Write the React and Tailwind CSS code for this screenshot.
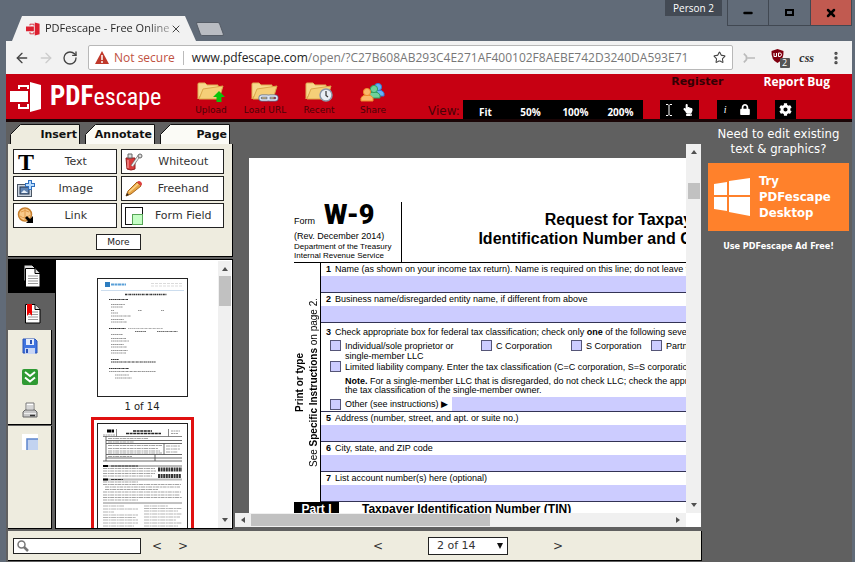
import React, { useState } from 'react';
import { ArrowLeft, ArrowRight, RotateCw, Star, X, Minus, MoreVertical } from 'lucide-react';
import { FaLock, FaHandPointUp, FaCog } from 'react-icons/fa';

const BrandMark = ({ className, color }) => (
  <svg className={className} viewBox="0 0 32 32" fill={color}>
    <path d="M20 1 L31 4 V28 L20 31 Z" />
    <path d="M0 10 H18 V21 H0 Z" />
    <path d="M9 8 V5 H18 V8 M9 23 V27 H18 V23" fill="none" stroke={color} strokeWidth="2" />
  </svg>
);

const FolderIcon = ({ children }) => (
  <svg className="w-7 h-5" viewBox="0 0 28 20">
    <path d="M1 17 V2 Q1 1 2 1 H8 L10 3 H21 V7 H8 Z" fill="#f7d98c" stroke="#e0b055" />
    <path d="M2 17 L6 7 L26 4 L22 17 Z" fill="#f5cf78" stroke="#dba94c" />
    {children}
  </svg>
);

const UploadIcon = () => (
  <FolderIcon>
    <path d="M22 9 L28 15 H24.500 V20 H19.500 V15 H16 Z" fill="#0bc40b" />
  </FolderIcon>
);

const LoadUrlIcon = () => (
  <FolderIcon>
    <g fill="none" stroke="#5b6f92" strokeWidth="3">
      <rect x="9" y="14" width="9" height="4" rx="2" />
      <rect x="17" y="14" width="9" height="4" rx="2" />
    </g>
    <g fill="none" stroke="#dfe6f2" strokeWidth="1.500">
      <rect x="9" y="14" width="9" height="4" rx="2" />
      <rect x="17" y="14" width="9" height="4" rx="2" />
    </g>
  </FolderIcon>
);

const RecentIcon = () => (
  <FolderIcon>
    <circle cx="21" cy="13" r="6" fill="#e9eef5" stroke="#8b97a8" strokeWidth="1.500" />
    <path d="M21 9 V13.500 L23 15" fill="none" stroke="#333" strokeWidth="1.200" />
  </FolderIcon>
);

const Person = ({ x, y, fill, stroke }) => (
  <g transform={`translate(${x} ${y})`} fill={fill} stroke={stroke}>
    <path d="M0 13 V10 Q1 7 6 7 Q11 7 12 10 V13 Z" />
    <circle cx="6" cy="4" r="3.600" />
  </g>
);

const ShareIcon = () => (
  <svg className="w-7 h-5" viewBox="0 0 28 20">
    <Person x="13" y="1" fill="#66b3f5" stroke="#3579d0" />
    <Person x="9" y="3" fill="#6fd19a" stroke="#2e9f5f" />
    <Person x="2" y="6" fill="#fbb769" stroke="#ee8a2c" />
  </svg>
);

const WhiteoutIcon = () => (
  <svg className="w-5 h-5" viewBox="0 0 20 20">
    <path d="M2 6 H11 V17 Q7 19 3 17 Z" fill="#d93a3a" stroke="#8d2020" />
    <path d="M4 8 V16" stroke="#f58a8a" strokeWidth="1.500" />
    <path d="M4 2 H8 V6 H4 Z" fill="#ddd" stroke="#666" />
    <path d="M8 14 L15 4" stroke="#777" strokeWidth="3" />
    <path d="M8 14 L15 4" stroke="#eee" strokeWidth="1.500" />
    <circle cx="16" cy="4" r="2" fill="#ddd" stroke="#666" />
  </svg>
);

const ImageIcon = () => (
  <svg className="w-5 h-5" viewBox="0 0 20 20">
    <rect x="1.500" y="5.500" width="14" height="12" fill="#c9d3df" stroke="#4a5563" />
    <rect x="4" y="8" width="9" height="7" fill="#5f82b0" stroke="#26374f" />
    <path d="M5 14 L8 11 L12 14 Z" fill="#e8f0fa" />
    <path d="M14 1 V11 M9 6 H19" stroke="#2f6fbe" strokeWidth="4" />
    <path d="M14 2 V10 M10 6 H18" stroke="#b8dcff" strokeWidth="2" />
  </svg>
);

const PencilIcon = () => (
  <svg className="w-5 h-5" viewBox="0 0 20 20">
    <path d="M2 17 L4 12 L13 3 L17 7 L7 15 Z" fill="#e8a544" stroke="#a8661c" />
    <path d="M13 3 Q15 1 17 3 Q19 5 17 7 Z" fill="#dc4040" />
    <path d="M5 13 L14 5" stroke="#f9d58c" strokeWidth="1.500" />
    <path d="M2 17 L3 14 L5 16 Z" fill="#222" />
  </svg>
);

const LinkIcon = () => (
  <svg className="w-5 h-5" viewBox="0 0 20 20">
    <circle cx="9" cy="8.500" r="6.500" fill="#f8c98a" stroke="#c67e2c" strokeWidth="1.500" />
    <path d="M5 6 Q9 3 13 6 M4 10 Q9 14 14 9 M9 2 V15" fill="none" stroke="#e09a4b" />
    <path d="M17 10 V17 H10 L12 15 L9 12 L11 10 L14 13 Z" fill="#000" />
  </svg>
);

const FieldIcon = () => (
  <svg className="w-5 h-5" viewBox="0 0 20 20">
    <rect x="1.500" y="1.500" width="17" height="17" fill="#fff" stroke="#111" />
    <rect x="8.500" y="8.500" width="10" height="10" fill="#c5ffc5" stroke="#57a557" />
  </svg>
);

const SheetIcon = ({ bookmark }) => (
  <svg className="w-5 h-6" viewBox="0 0 20 24">
    {!bookmark && <path d="M2 1 H10 L14 5 V17 H2 Z" fill="#ddd" stroke="#000" />}
    <path d="M3.500 4.500 H13 L18 9.500 V23 H3.500 Z" fill="#fff" stroke="#000" />
    <path d="M13 4.500 V9.500 H18" fill="#ddd" stroke="#000" />
    <path d="M6 12 H16 M6 14.500 H16 M6 17 H16 M6 19.500 H16" stroke="#999" />
    {bookmark && <path d="M5 4 H10 V16 L7.500 13 L5 16 Z" fill="#f00000" />}
  </svg>
);

const SaveIcon = () => (
  <svg className="w-4 h-4" viewBox="0 0 16 16">
    <path d="M1 1 H13 L15 3 V15 H1 Z" fill="#3f74e0" stroke="#2b53b5" />
    <rect x="4" y="1" width="8" height="6" fill="#e3ebfb" />
    <rect x="8" y="2" width="2" height="4" fill="#2b53b5" />
    <rect x="3" y="10" width="10" height="6" fill="#c8d6f5" />
    <rect x="4" y="11" width="2" height="4" fill="#2b53b5" />
  </svg>
);

const DownloadIcon = () => (
  <svg className="w-4 h-4" viewBox="0 0 16 16">
    <rect width="16" height="16" rx="2" fill="#2f9a33" />
    <path d="M3 3 L8 7 L13 3 M3 8.500 L8 12.500 L13 8.500" fill="none" stroke="#fff" strokeWidth="2" />
  </svg>
);

const PrintIcon = () => (
  <svg className="w-4 h-5" viewBox="0 0 16 20">
    <path d="M4 10 L4 3 H12 V10" fill="#fff" stroke="#777" />
    <path d="M5 6 H11 M5 8 H11" stroke="#aaa" />
    <path d="M3 10 H13 L15 12 V17 H1 V12 Z" fill="#c8c8c8" stroke="#666" />
    <path d="M2 13.500 H14" stroke="#eee" />
    <path d="M8 15.500 H13" stroke="#333" strokeWidth="1.500" />
  </svg>
);

const WindowsIcon = () => (
  <svg className="w-9 h-10" viewBox="0 0 36 40" fill="#fff">
    <path d="M0 7 L13 5 V18 H0 Z M15 4 L36 1 V18 H15 Z M0 20 H13 V34 L0 32 Z M15 20 H36 V39 L15 35 Z" />
  </svg>
);

const Arrow = ({ d }) => (
  <svg className="w-2 h-2 shrink-0" viewBox="0 0 8 8" fill="#505050">
    <path d={d} />
  </svg>
);

const UP = 'M1 6 L4 2 L7 6 Z';
const DOWN = 'M1 2 L4 6 L7 2 Z';
const LEFT = 'M6 1 L2 4 L6 7 Z';
const RIGHT = 'M2 1 L6 4 L2 7 Z';

const actions = [
  { label: 'Upload', icon: UploadIcon },
  { label: 'Load URL', icon: LoadUrlIcon },
  { label: 'Recent', icon: RecentIcon },
  { label: 'Share', icon: ShareIcon }
];

const insertTools = [
  { label: 'Text', icon: () => <span className="w-5 text-center font-['Liberation_Serif',serif] font-bold text-[24px] leading-5 text-black">T</span> },
  { label: 'Whiteout', icon: WhiteoutIcon },
  { label: 'Image', icon: ImageIcon },
  { label: 'Freehand', icon: PencilIcon },
  { label: 'Link', icon: LinkIcon },
  { label: 'Form Field', icon: FieldIcon }
];

const TitleBar = () => (
  <div className="flex justify-between h-[41px] shrink-0">
    <div className="flex items-end pl-[6px]">
      <div className="flex items-center w-[184px] h-[25px] pl-[14px] pr-[14px] bg-[#f2f2f2] [clip-path:polygon(10px_0,calc(100%-11px)_0,100%_100%,0_100%)]">
        <BrandMark className="w-[14px] h-[14px] shrink-0" color="#dc2030" />
        <span className="flex-1 ml-[5px] text-[11px] whitespace-nowrap bg-linear-to-r from-[#222] from-80% to-[#aaa] bg-clip-text text-transparent">
          PDFescape - Free Online
        </span>
        <button aria-label="Close tab" className="shrink-0"><X className="w-3 h-3 text-[#444]" /></button>
      </div>
      <button aria-label="New tab" className="w-[24px] h-[14px] mb-[5px] ml-[2px] skew-x-[20deg] rounded-xs bg-[#b9bcc2] border border-[#555c66]" />
    </div>
    <div className="flex items-start">
      <span className="h-4 px-2 mr-[5px] bg-[#434a54] text-white text-[10px] leading-4">Person 2</span>
      <button aria-label="Minimize" className="flex justify-center items-center w-[42px] h-[26px] border border-t-0 border-[#414852]">
        <Minus className="w-3 h-3 text-black" strokeWidth={5} />
      </button>
      <button aria-label="Maximize" className="flex justify-center items-center w-[41px] h-[26px] border-b border-[#414852]">
        <span className="w-[9px] h-[7px] border-2 border-black" />
      </button>
      <button aria-label="Close" className="flex justify-center items-center w-[42px] h-[26px] border border-t-0 border-[#414852] bg-[#c15a50]">
        <X className="w-3 h-3 text-black" strokeWidth={5} />
      </button>
    </div>
  </div>
);

const AddressBar = () => (
  <div className="flex items-center h-[33px] shrink-0 pl-2 pr-2 bg-[#f2f2f2]">
    <button aria-label="Back"><ArrowLeft className="w-4 h-4 text-[#444]" /></button>
    <button aria-label="Forward" className="ml-2"><ArrowRight className="w-4 h-4 text-[#ccc]" /></button>
    <button aria-label="Reload" className="ml-2"><RotateCw className="w-4 h-4 text-[#444]" /></button>
    <div className="flex items-center flex-1 min-w-0 h-[25px] ml-[10px] pl-[6px] pr-[6px] bg-white border border-[#b8b8b8] rounded-xs">
      <svg className="w-[14px] h-[13px] shrink-0" viewBox="0 0 14 13">
        <path d="M7 0 L14 13 H0 Z" fill="#c0392b" />
        <path d="M7 4 V9 M7 10 V12" stroke="#fff" strokeWidth="1.500" />
      </svg>
      <span className="ml-[5px] text-[12px] text-[#c0513f] whitespace-nowrap">Not secure</span>
      <span className="w-px h-[14px] mx-2 bg-[#bbb]" />
      <span className="flex-1 min-w-0 whitespace-nowrap text-[12px] text-[#777]">
        <span className="text-[#222]">www.pdfescape.com</span>/open/?C27B608AB293C4E271AF400102F8AEBE742D3240DA593E71
      </span>
      <button aria-label="Bookmark"><Star className="w-[13px] h-[13px] text-[#444]" /></button>
    </div>
    <svg className="w-3 h-3 shrink-0 ml-[10px]" viewBox="0 0 14 12" fill="none" stroke="#bbb" strokeWidth="2">
      <path d="M1 1 L4 4 V8 L1 11 M5 6 H14" />
    </svg>
    <svg className="w-5 h-5 shrink-0 ml-4" viewBox="0 0 20 20">
      <path d="M6.500 1 L12.500 3 Q13 12 6.500 15 Q0 12 0.500 3 Z" fill="#800010" />
      <path d="M3 5 V8.500 H5.500 V5 M7.500 5 V8.500 H9 Q10.500 8 10.500 6.700 Q10.500 5 9 5 Z" fill="none" stroke="#fff" strokeWidth="1" />
      <rect x="9" y="10" width="10" height="10" rx="1" fill="#555" />
      <text x="11" y="18" fill="#fff" fontSize="9">2</text>
    </svg>
    <span className="ml-2 font-['Liberation_Serif',serif] italic font-bold text-[12px] text-[#333]">css</span>
    <button aria-label="Menu" className="ml-[14px]"><MoreVertical className="w-4 h-4 text-[#444]" strokeWidth={3} /></button>
  </div>
);

const AppHeader = () => (
  <header className="flex h-12 shrink-0 pl-1 bg-[#c70012] border-b-3 border-[#1a0506]">
    <a href="#home" className="flex items-center text-white font-['Liberation_Sans_Narrow','Roboto_Condensed',sans-serif]">
      <BrandMark className="w-8 h-8" color="#fff" />
      <span className="flex items-baseline w-[114px] ml-2 leading-8">
        <span className="text-[27px] font-bold">PDF</span>
        <span className="text-[24px]">escape</span>
      </span>
    </a>
    <nav className="flex ml-[20px] font-['DejaVu_Sans',sans-serif]">
      {actions.map(({ label, icon: Icon }) => (
        <button key={label} className="flex flex-col items-center w-[54px] pt-2 text-[9px] leading-4 text-[#4a0207] whitespace-nowrap">
          <Icon />
          {label}
        </button>
      ))}
    </nav>
    <div className="flex flex-col flex-1 justify-between pl-[28px]">
      <div className="flex justify-end gap-10 pr-[22px] text-[12px] leading-4 font-bold whitespace-nowrap">
        <a href="#register" className="text-[#330004] text-[11px] font-['DejaVu_Sans',sans-serif]">Register</a>
        <a href="#bug" className="text-white">Report Bug</a>
      </div>
      <div className="flex items-end h-[19px]">
        <span className="w-[35px] text-[12px] leading-4 text-[#4a0207] font-['DejaVu_Sans',sans-serif]">View:</span>
        <div className="flex bg-black">
          {['Fit', '50%', '100%', '200%'].map((zoom) => (
            <button key={zoom} className="w-[45px] h-[19px] pt-1 text-[10px] leading-4 font-bold text-white">{zoom}</button>
          ))}
        </div>
        <div className="flex justify-around items-center w-[39px] h-[19px] ml-[17px] bg-black text-white">
          <button aria-label="Select text">
            <svg className="w-2 h-3" viewBox="0 0 8 12" fill="none" stroke="#fff"><path d="M1 0.500 H3 L4 1.500 L5 0.500 H7 M4 1.500 V10.500 M1 11.500 H3 L4 10.500 L5 11.500 H7" /></svg>
          </button>
          <button aria-label="Pan"><FaHandPointUp className="w-3 h-3" /></button>
        </div>
        <div className="flex justify-around items-center w-[40px] h-[19px] ml-[18px] bg-black text-white">
          <button className="font-['Liberation_Serif',serif] italic text-[10px]">i</button>
          <button aria-label="Lock"><FaLock className="w-[10px] h-[11px]" /></button>
        </div>
        <button aria-label="Settings" className="flex justify-center items-center w-[21px] h-[19px] ml-[18px] bg-black text-white">
          <FaCog className="w-[13px] h-[13px]" />
        </button>
      </div>
    </div>
  </header>
);

const ToolPanel = () => {
  const [activeTab, setActiveTab] = useState('Insert');

  return (
    <div className="shrink-0 font-['DejaVu_Sans',sans-serif]">
      <div className="flex gap-[5px] pl-[2px] pt-[2px]">
        {['Insert', 'Annotate', 'Page'].map((tab) => (
          <button
            key={tab}
            onClick={() => setActiveTab(tab)}
            className="relative w-[70px] h-5 pt-[2px] pr-[3px] text-right text-[11px] leading-[18px] font-bold text-[#111]"
          >
            <svg className="absolute inset-0 w-full h-full" viewBox="0 0 70 20" preserveAspectRatio="none">
              <path d="M0.500 20 V10.500 L10.500 0.500 H69.500 V20" fill={activeTab === tab ? '#eeecdf' : '#fbfbf6'} stroke="#111" />
            </svg>
            <span className="relative">{tab}</span>
          </button>
        ))}
      </div>
      <div className="flex flex-col items-center pt-[5px] pb-[6px] pl-[5px] pr-2 bg-[#eeecdf] border-r border-b border-black">
        <div className="grid grid-cols-2 w-full gap-x-1 gap-y-[2px]">
          {insertTools.map(({ label, icon: Icon }) => (
            <button key={label} className="flex items-center h-[25px] pl-[2px] bg-white border border-[#222] text-[11px] text-[#333]">
              <Icon />
              <span className="flex-1 pt-[2px]">{label}</span>
            </button>
          ))}
        </div>
        <button className="w-[45px] h-4 mt-[6px] bg-white border border-[#222] text-[9px] leading-[14px] text-[#222]">More</button>
      </div>
    </div>
  );
};

const CoverThumb = () => (
  <svg className="block w-full" viewBox="0 0 89 117">
    <rect width="89" height="117" fill="#fff" />
    <rect x="7" y="3" width="5" height="5" fill="#2d7dc0" />
    <path d="M13 5.500 H28" stroke="#5aa0d8" strokeWidth="2" strokeDasharray="3 0.500" />
    <path d="M53 4.500 H84 M53 7 H84" stroke="#ccc" strokeWidth="0.700" strokeDasharray="3 1" />
    <path d="M3 11.500 H86" stroke="#cde" />
    <path d="M27 15.500 H69" stroke="#333" strokeWidth="1.600" strokeDasharray="2 0.600 1 0.600" />
    <g stroke="#777" strokeWidth="0.800" strokeDasharray="1 0.500 2 0.400">
      <path d="M11 20.500 H30 M11 49.500 H28 M11 89.500 H31" stroke="#333" strokeWidth="1.200" />
      <path d="M13 25.500 H27 M13 28 H25 M13 31.500 H16 M40 31.500 H44 M63 31.500 H66 M13 34 H20 M13 37 H33 M13 40.500 H26 M13 43 H29" />
      <path d="M30 49.500 H65" stroke="#999" />
      <path d="M37 52.500 H48 M59 52.500 H80" stroke="#444" />
      <path d="M13 55.500 H25 M13 59.500 H28 M13 62 H31 M13 65.500 H26 M13 68 H29 M13 71.500 H30 M13 74 H28" />
      <path d="M13 80.500 H21 M13 83 H58" stroke="#333" strokeWidth="1.200" />
      <path d="M11 92.500 H58 M17 96 H31 M17 99 H34" />
    </g>
  </svg>
);

const FormThumb = () => (
  <svg className="block w-full" viewBox="0 0 89 117">
    <rect width="89" height="117" fill="#fff" />
    <path d="M9 7 H16" stroke="#000" strokeWidth="3" strokeDasharray="4 0.500" />
    <path d="M5 11 H17 M73 7 H82 M73 9.500 H80" stroke="#888" strokeWidth="0.800" strokeDasharray="2 0.500" />
    <path d="M18.500 5 V12.500 M70.500 5 V12.500 M5 12.500 H84" stroke="#555" strokeWidth="0.700" />
    <path d="M35 7 H54 M28 9.500 H63" stroke="#222" strokeWidth="1.600" strokeDasharray="3 0.600" />
    <path d="M8 12.500 V37 M8 16.500 H84 M8 19.500 H84 M8 30.500 H84 M8 34 H84 M57 30.500 V37 M66 19.500 V30.500 M5 37 H84" stroke="#444" strokeWidth="0.800" fill="none" />
    <g stroke="#999" strokeWidth="0.900" strokeDasharray="4 0.700 2 0.500">
      <path d="M10 14.500 H50 M10 18 H36 M10 21.500 H64 M10 24.500 H60 M10 27 H62 M10 29 H64 M10 32.500 H34 M68 22 H82 M68 25 H82 M68 28 H80" />
      <path d="M5 44.500 H57 M5 47 H58 M5 49.500 H57 M5 52 H54" />
      <path d="M5 58 H40 M5 60.500 H83 M7 63 H82 M7 65.500 H60 M5 68 H83 M5 71 H82 M5 73.500 H84 M5 76 H40" />
    </g>
    <path d="M5 42 H84 M5 55.500 H84" stroke="#bbb" strokeWidth="1.800" />
    <path d="M5 42 H10 M5 55.500 H10" stroke="#000" strokeWidth="2" />
    <path d="M13 42 H40 M13 55.500 H25" stroke="#333" strokeDasharray="3 0.500" />
    <path d="M60 45.500 H84 M60 52 H83" stroke="#333" strokeWidth="4" strokeDasharray="2 0.600" />
    <path d="M5 79 H84" stroke="#666" strokeWidth="0.800" />
    <g stroke="#aaa" strokeWidth="0.900" strokeDasharray="5 0.600 2 0.500">
      <path d="M5 82 H26 M5 85 H40 M5 88 H16 M5 91 H40 M5 93.500 H38 M5 96 H40 M5 99 H40 M5 102 H36" />
      <path d="M46 82 H70 M46 84.500 H84 M46 87 H80 M46 90 H84 M46 93 H82 M46 96 H78 M46 99 H84 M46 102 H80" />
    </g>
  </svg>
);

const Navigator = () => (
  <div className="flex flex-1 min-h-0 mt-[2px]">
    <div className="flex flex-col w-[47px] shrink-0">
      <button aria-label="Pages" className="flex justify-center items-center h-[34px] bg-black"><SheetIcon /></button>
      <button aria-label="Bookmarks" className="flex justify-center items-center h-[37px]"><SheetIcon bookmark /></button>
      <div className="flex flex-col items-center gap-[15px] w-[44px] h-[95px] pt-2 bg-[#eeecdf] border-r border-b border-black">
        <button aria-label="Save"><SaveIcon /></button>
        <button aria-label="Download"><DownloadIcon /></button>
        <button aria-label="Print"><PrintIcon /></button>
      </div>
      <div className="flex flex-col flex-1 items-center w-[44px] mt-px pt-2 bg-[#eeecdf] border-r border-b border-black">
        <button aria-label="Toggle field">
          <svg className="w-4 h-4" viewBox="0 0 16 16">
            <rect width="16" height="16" fill="#fff" />
            <path d="M16 5 H5 V16 H16 Z" fill="#c2d3f0" />
            <path d="M16 5 H5 V16" fill="none" stroke="#5c85cc" strokeWidth="1.500" />
          </svg>
        </button>
      </div>
    </div>
    <div className="flex flex-1 min-w-0 pr-px bg-white border border-black">
      <div className="flex flex-col flex-1 items-center overflow-hidden pt-[18px] pl-[10px]">
        <button className="w-[91px] shrink-0 border border-[#222]"><CoverThumb /></button>
        <span className="py-[3px] text-[10px] leading-[14px] text-[#222] font-['DejaVu_Sans',sans-serif]">1 of 14</span>
        <button className="w-[103px] shrink-0 p-[3px] border-3 border-[#e01010]">
          <span className="block border border-[#222]"><FormThumb /></span>
        </button>
      </div>
      <div className="flex flex-col justify-between items-center w-[13px] mt-px py-1 bg-[#f0f0f0]">
        <div className="flex flex-col items-center gap-[3px]">
          <Arrow d={UP} />
          <span className="w-3 h-[30px] bg-[#c1c1c1]" />
        </div>
        <Arrow d={DOWN} />
      </div>
    </div>
  </div>
);

const Check = ({ label, className }) => (
  <label className={`flex items-center gap-1 leading-[10px] ${className || ''}`}>
    <input type="checkbox" className="appearance-none w-[11px] h-[11px] shrink-0 bg-[#ccccff] border border-[#555577]" />
    {label}
  </label>
);

const FormRow = ({ number, label }) => (
  <label className="block border-b border-[#333355]">
    <span className="flex h-[13px] pl-[5px] leading-[12px]">
      <b className="w-[9px] shrink-0">{number}</b>
      {label}
    </span>
    <input className="block w-full h-4 bg-[#ccccff]" />
  </label>
);

const FormPage = () => (
  <div className="flex-1 min-w-0 h-full pt-11 pl-[45px] bg-white text-black text-[9px] whitespace-nowrap overflow-hidden font-['Liberation_Sans',sans-serif]">
    <div className="flex h-[61px] border-b border-black">
      <div className="w-[108px] shrink-0 border-r border-black">
        <div className="flex items-baseline gap-[9px] h-[26px]">
          <span>Form</span>
          <span className="text-[27px] leading-[26px] font-black font-['Roboto',sans-serif]">W-9</span>
        </div>
        <p className="pt-[2px] leading-[12px]">(Rev. December 2014)</p>
        <p className="text-[8px] leading-[9px]">Department of the Treasury</p>
        <p className="text-[8px] leading-[9px]">Internal Revenue Service</p>
      </div>
      <h1 className="w-[448px] shrink-0 pt-2 text-center text-[16px] leading-[19px] font-bold">
        Request for Taxpayer
        <br />
        Identification Number and Certification
      </h1>
    </div>
    <div className="flex">
      <div className="flex justify-between items-center w-[26px] shrink-0 text-[10px] leading-3">
        <b className="[writing-mode:vertical-rl] rotate-180">Print or type</b>
        <span className="[writing-mode:vertical-rl] rotate-180">See <b>Specific Instructions</b> on page 2.</span>
      </div>
      <div className="flex-1 min-w-0 border-l border-black">
        <FormRow number="1" label="Name (as shown on your income tax return). Name is required on this line; do not leave this line blank." />
        <FormRow number="2" label="Business name/disregarded entity name, if different from above" />
        <div className="pt-[3px] border-b border-[#333355]">
          <p className="flex pl-[5px] leading-[12px]">
            <b className="w-[9px] shrink-0">3</b>
            <span>Check appropriate box for federal tax classification; check only <b>one</b> of the following seven boxes:</span>
          </p>
          <div className="flex pt-[2px] pl-[9px]">
            <Check className="w-[151px] shrink-0" label="Individual/sole proprietor or" />
            <Check className="w-[90px] shrink-0" label="C Corporation" />
            <Check className="w-[80px] shrink-0" label="S Corporation" />
            <Check label="Partnership" />
          </div>
          <p className="pl-6 leading-[10px]">single-member LLC</p>
          <Check className="pl-[9px]" label="Limited liability company. Enter the tax classification (C=C corporation, S=S corporation, P=partnership)" />
          <p className="pt-1 pl-6 leading-[10px]"><b>Note.</b> For a single-member LLC that is disregarded, do not check LLC; check the appropriate box</p>
          <p className="pl-6 leading-[9px]">the tax classification of the single-member owner.</p>
          <div className="flex pt-[2px] pl-[9px]">
            <Check className="w-[122px] shrink-0" label="Other (see instructions) ▶" />
            <input aria-label="Other" className="flex-1 min-w-0 h-[14px] bg-[#ccccff]" />
          </div>
        </div>
        <FormRow number="5" label="Address (number, street, and apt. or suite no.)" />
        <FormRow number="6" label="City, state, and ZIP code" />
        <FormRow number="7" label="List account number(s) here (optional)" />
      </div>
    </div>
    <div className="flex text-[12px] leading-[15px] font-bold">
      <span className="w-[45px] mr-[23px] bg-black text-white text-center">Part I</span>
      Taxpayer Identification Number (TIN)
    </div>
  </div>
);

const Viewer = () => (
  <main className="flex flex-col flex-1 min-w-0 mt-[22px] mr-px mb-[2px]">
    <div className="flex flex-1 min-h-0">
      <div className="flex-1 min-w-0 overflow-hidden pt-[14px] pl-[14px]">
        <FormPage />
      </div>
      <div className="flex flex-col justify-between items-center w-[15px] py-1 bg-[#f0f0f0]">
        <div className="flex flex-col items-center gap-[27px]">
          <Arrow d={UP} />
          <span className="w-3 h-4 bg-[#c1c1c1]" />
        </div>
        <Arrow d={DOWN} />
      </div>
    </div>
    <div className="flex bg-white">
      <div className="flex flex-1 justify-between items-center h-[14px] pl-1 pr-1 bg-[#f0f0f0]">
        <div className="flex flex-1 items-center gap-1">
          <Arrow d={LEFT} />
          <span className="w-[55%] h-3 bg-[#c1c1c1]" />
        </div>
        <Arrow d={RIGHT} />
      </div>
      <span className="w-[15px]" />
    </div>
  </main>
);

const BottomBar = () => (
  <footer className="flex items-center h-[30px] shrink-0 mt-[2px] mb-px pl-[5px] bg-[#eeecdf] border-r border-b border-black text-[12px] text-[#333] font-['DejaVu_Sans',sans-serif]">
    <div className="flex items-center w-[128px] h-4 pl-[3px] bg-white border border-[#222]">
      <svg className="w-3 h-3 shrink-0" viewBox="0 0 12 12" fill="none" stroke="#777">
        <circle cx="4.500" cy="4.500" r="3.500" strokeWidth="1.500" />
        <path d="M7 7 L11 11" strokeWidth="2.500" />
      </svg>
      <input aria-label="Search" className="w-full min-w-0 h-3 px-1 text-[10px] outline-none" />
    </div>
    <button className="w-5 ml-[6px]">&lt;</button>
    <button className="w-5 ml-[6px]">&gt;</button>
    <div className="flex items-center ml-[175px]">
      <button className="w-5">&lt;</button>
      <div className="relative ml-10">
        <select aria-label="Page" defaultValue="2" className="block appearance-none w-[80px] h-[18px] pl-2 bg-white border border-[#222] text-[11px] leading-4">
          {Array.from({ length: 14 }, (_, i) => (
            <option key={i} value={i + 1}>{i + 1} of 14</option>
          ))}
        </select>
        <svg className="absolute right-1 top-[5px] w-2 h-2 pointer-events-none" viewBox="0 0 8 8" fill="#111">
          <path d="M1 1 H7 L4 7 Z" />
        </svg>
      </div>
      <button className="w-5 ml-10">&gt;</button>
    </div>
  </footer>
);

const Promo = () => (
  <aside className="flex flex-col w-[150px] shrink-0 pt-1 pl-[6px] pr-[3px] text-white text-center font-['DejaVu_Sans_Condensed','Open_Sans',sans-serif]">
    <p className="text-[13px] leading-[15px] whitespace-nowrap">
      Need to edit existing
      <br />
      text &amp; graphics?
    </p>
    <a href="#desktop" className="flex items-center gap-[9px] h-[68px] mt-[7px] pl-[6px] bg-[#ff812b] text-left text-[13px] leading-4 font-bold">
      <WindowsIcon />
      <span>
        Try
        <br />
        PDFescape
        <br />
        Desktop
      </span>
    </a>
    <a href="#ad-free" className="mt-2 text-[9px] leading-[14px] font-bold whitespace-nowrap">Use PDFescape Ad Free!</a>
  </aside>
);

const App = () => {
  return (
    <div className="flex flex-col h-screen overflow-hidden pl-[6px] pr-[3px] bg-[#616b78] font-['Open_Sans','Noto_Sans',sans-serif]">
      <TitleBar />
      <AddressBar />
      <AppHeader />

      {/* Workspace */}
      <div className="flex flex-1 min-h-0 bg-[#606060]">
        <div className="flex flex-col flex-1 min-w-0 pl-[2px]">
          <div className="flex flex-1 min-h-0 gap-[2px]">
            <div className="flex flex-col w-[225px] shrink-0">
              <ToolPanel />
              <Navigator />
            </div>
            <Viewer />
          </div>
          <BottomBar />
        </div>
        <Promo />
      </div>
    </div>
  );
};

export default App;
